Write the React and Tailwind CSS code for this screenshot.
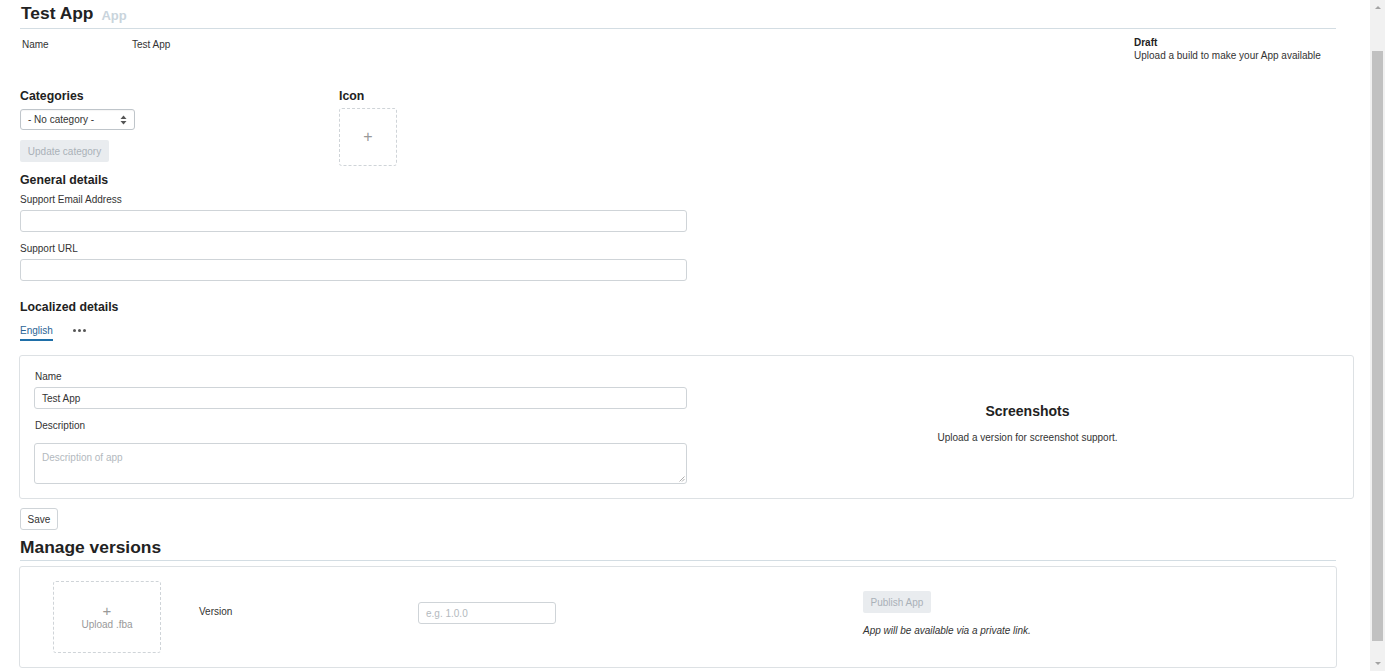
import React from 'react';

const font = { fontFamily: '"Liberation Sans", Arial, sans-serif' };

const Label = ({ children, className = '' }) => (
  <div className={`text-[10px] leading-[13px] text-[#333] ${className}`}>{children}</div>
);

const Heading = ({ children, className = '' }) => (
  <div className={`text-[12.3px] leading-[15px] font-bold text-[#222] ${className}`}>{children}</div>
);

const Scrollbar = () => (
  <div className="w-[15px] h-full bg-[#f1f1f1] flex flex-col items-center shrink-0">
    <div className="h-[15px] flex items-center justify-center">
      <div className="w-0 h-0 border-l-[3px] border-r-[3px] border-b-[3px] border-l-transparent border-r-transparent border-b-[#a3a3a3]" />
    </div>
    <div className="w-full px-[2px] flex-1 flex flex-col">
      <div className="mt-[36px] mb-[15px] flex-1 bg-[#c1c1c1]" />
    </div>
    <div className="h-[15px] flex items-center justify-center">
      <div className="w-0 h-0 border-l-[3px] border-r-[3px] border-t-[3px] border-l-transparent border-r-transparent border-t-[#a3a3a3]" />
    </div>
  </div>
);

export default function App() {
  return (
    <div className="flex w-[1385px] h-[671px] overflow-hidden bg-white" style={font}>
      <div className="flex-1 overflow-hidden pl-[20px] pr-[34px]">
        {/* header */}
        <div className="border-b border-[#d3dde3] h-[29px] flex items-end pb-[5px]">
          <span className="text-[17.4px] leading-[20px] font-bold text-[#222] ml-[1px]">Test App</span>
          <span className="text-[13px] leading-[16px] font-bold text-[#c9d4dc] ml-[8px] mb-[-1px]">App</span>
        </div>

        <div className="flex justify-between mt-[8px]">
          <div className="flex pt-[1px]">
            <Label className="w-[110px] ml-[2px]">Name</Label>
            <Label>Test App</Label>
          </div>
          <div className="w-[202px]">
            <div className="text-[10px] leading-[12px] font-bold text-[#222]">Draft</div>
            <div className="text-[10px] leading-[13px] text-[#333]">Upload a build to make your App available</div>
          </div>
        </div>

        {/* categories + icon */}
        <div className="flex mt-[27px]">
          <div className="w-[319px]">
            <Heading>Categories</Heading>
            <div className="mt-[5px] w-[115px] h-[21px] border border-[#bfc5ca] rounded-[3px] flex items-center justify-between px-[7px] shadow-[inset_0_1px_1px_rgba(0,0,0,0.04)]">
              <span className="text-[10px] text-[#333]">- No category -</span>
              <svg width="7" height="10" viewBox="0 0 7 10">
                <path d="M3.5 0.5 L6.5 4 L0.5 4 Z" fill="#555" />
                <path d="M3.5 9.5 L6.5 6 L0.5 6 Z" fill="#555" />
              </svg>
            </div>
            <div className="mt-[10px] w-[89px] h-[22px] bg-[#e9ecef] rounded-[2px] flex items-center justify-center text-[10px] text-[#a9b1b8]">
              Update category
            </div>
          </div>
          <div>
            <Heading>Icon</Heading>
            <div className="mt-[4px] w-[58px] h-[58px] border border-dashed border-[#cfd4d8] rounded-[3px] flex items-center justify-center text-[16px] text-[#999] font-light">
              +
            </div>
          </div>
        </div>

        {/* general details */}
        <Heading className="mt-[7px]">General details</Heading>
        <Label className="mt-[5px]">Support Email Address</Label>
        <div className="mt-[4px] w-[667px] h-[22px] border border-[#cfd4d8] rounded-[3px]" />
        <Label className="mt-[10px]">Support URL</Label>
        <div className="mt-[4px] w-[667px] h-[22px] border border-[#cfd4d8] rounded-[3px]" />

        <Heading className="mt-[19px]">Localized details</Heading>
        <div className="flex items-start mt-[9px] gap-[19px]">
          <div className="text-[10px] leading-[13px] text-[#2a6496] border-b-2 border-[#1f6fa8] pb-[2px]">English</div>
          <div className="flex gap-[2px] mt-[5px] ml-[1px]">
            <span className="w-[3px] h-[3px] rounded-full bg-[#555]" />
            <span className="w-[3px] h-[3px] rounded-full bg-[#555]" />
            <span className="w-[3px] h-[3px] rounded-full bg-[#555]" />
          </div>
        </div>

        {/* localized card */}
        <div className="mt-[14px] -ml-[1px] w-[1335px] h-[144px] border border-[#dde1e4] rounded-[3px] flex">
          <div className="w-[682px] pl-[14px] pt-[14px]">
            <Label className="ml-[1px]">Name</Label>
            <div className="mt-[4px] w-[653px] h-[22px] border border-[#cfd4d8] rounded-[3px] flex items-center px-[7px] text-[10px] text-[#333]">
              Test App
            </div>
            <Label className="mt-[10px] ml-[1px]">Description</Label>
            <div className="mt-[11px] w-[653px] h-[41px] border border-[#cfd4d8] rounded-[3px] px-[7px] pt-[7px] text-[10px] leading-[13px] text-[#b3b9be] relative">
              Description of app
              <svg className="absolute right-[1px] bottom-[1px]" width="6" height="6" viewBox="0 0 6 6">
                <path d="M5.5 0.5 L0.5 5.5 M5.5 3 L3 5.5" stroke="#999" strokeWidth="0.8" />
              </svg>
            </div>
          </div>
          <div className="flex-1 flex flex-col items-center pt-[47px]">
            <div className="text-[14px] leading-[16px] font-bold text-[#222]">Screenshots</div>
            <Label className="mt-[12px]">Upload a version for screenshot support.</Label>
          </div>
        </div>

        <div className="mt-[9px] w-[38px] h-[22px] border border-[#cfd4d8] rounded-[3px] flex items-center justify-center text-[10px] text-[#333]">
          Save
        </div>

        <div className="mt-[8px] border-b border-[#d3dde3] h-[23px] flex items-end pb-[3px]">
          <span className="text-[17.4px] leading-[20px] font-bold text-[#222]">Manage versions</span>
        </div>

        {/* versions card */}
        <div className="mt-[5px] -ml-[1px] w-[1318px] h-[102px] border border-[#dde1e4] rounded-[3px] flex items-start">
          <div className="ml-[33px] mt-[14px] w-[108px] h-[72px] border border-dashed border-[#cfd4d8] rounded-[3px] flex flex-col items-center justify-center text-[#999]">
            <div className="text-[15px] leading-[13px] font-light">+</div>
            <div className="text-[10px] leading-[13px] mt-[1px]">Upload .fba</div>
          </div>
          <Label className="ml-[38px] mt-[38px] w-[219px]">Version</Label>
          <div className="mt-[35px] w-[138px] h-[22px] border border-[#cfd4d8] rounded-[3px] flex items-center px-[7px] text-[10px] text-[#b3b9be]">
            e.g. 1.0.0
          </div>
          <div className="ml-[307px] mt-[24px]">
            <div className="w-[68px] h-[22px] bg-[#e9ecef] rounded-[2px] flex items-center justify-center text-[10px] text-[#a9b1b8]">
              Publish App
            </div>
            <div className="mt-[11px] text-[10px] leading-[13px] italic text-[#333]">App will be available via a private link.</div>
          </div>
        </div>
      </div>
      <Scrollbar />
    </div>
  );
}
